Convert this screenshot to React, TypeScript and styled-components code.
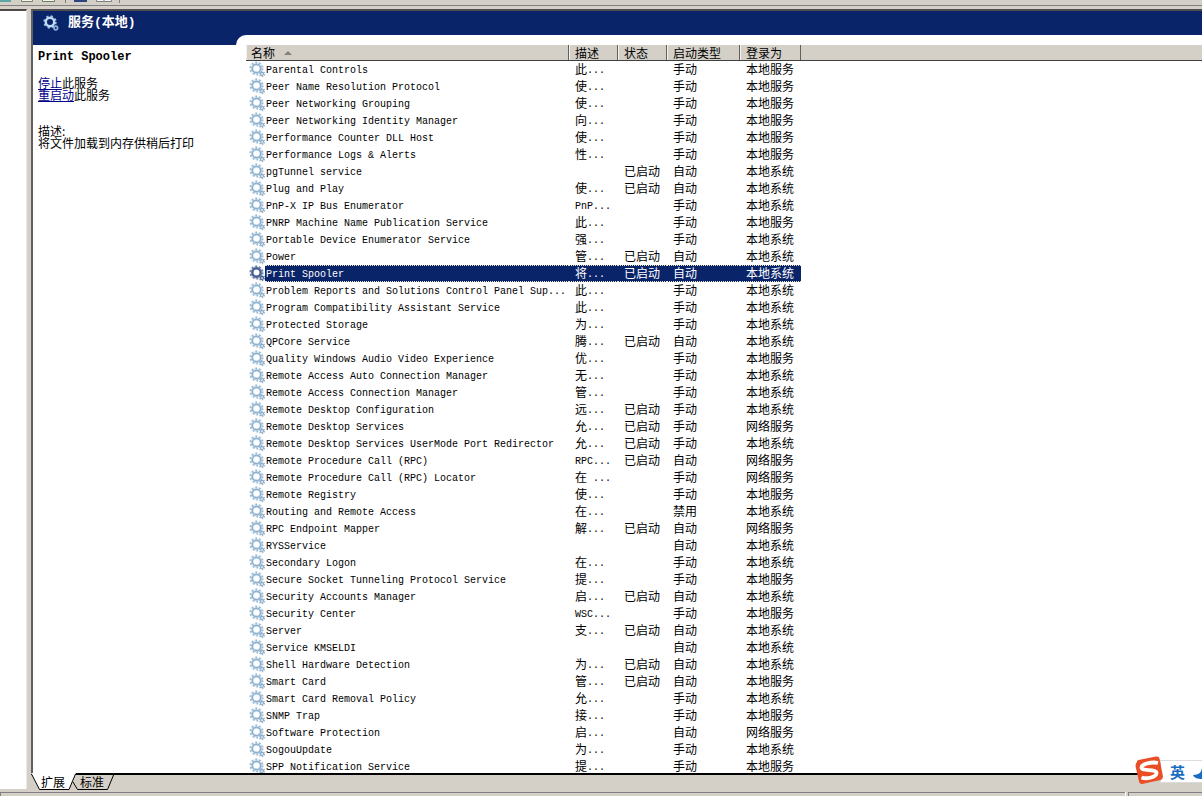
import React from "react";
import styled, { createGlobalStyle, css } from "styled-components";

const face = "#d4d0c8";
const navy = "#0a246a";
const cjk = '"Noto Sans CJK SC", sans-serif';
const mono = '"Liberation Mono", "Noto Sans CJK SC", monospace';

const GlobalStyle = createGlobalStyle`
  * { box-sizing: border-box; }
  body { margin: 0; background: ${face}; color: #000; font: 12px/17px ${cjk}; }
  button { font: inherit; color: inherit; border: 0; padding: 0; background: none; text-align: left; }
`;

const Window = styled.div`
  display: flex;
  flex-direction: column;
  height: 100vh;
  overflow: hidden;
  background: ${face};
`;

const Toolbar = styled.div`
  flex: none;
  height: 6px;
  margin-bottom: 3px;
  border-bottom: 1px solid #808080;
  svg { display: block; }
`;

const Main = styled.main`
  flex: 1;
  min-height: 0;
  display: flex;
  gap: 4px;
`;

const TreePane = styled.aside`
  flex: none;
  width: 27px;
  margin-bottom: 1px;
  background: #fff;
  border-top: 2px solid #504a46;
  border-right: 1px solid #ece9e2;
`;

const ViewPane = styled.section`
  flex: 1;
  min-width: 0;
  display: flex;
  flex-direction: column;
`;

const View = styled.div`
  flex: 1;
  min-height: 0;
  display: flex;
  flex-direction: column;
  border-top: 2px solid #504e50;
  border-left: 2px solid #606060;
  background: ${navy};
`;

const TitleBand = styled.header`
  flex: none;
  display: flex;
  align-items: center;
  gap: 9px;
  height: 24px;
  padding-left: 10px;
  color: #fff;
`;

const Title = styled.h1`
  margin: 0;
  font: 700 13px/16px ${mono};
`;

const Body = styled.div`
  flex: 1;
  min-height: 0;
  display: flex;
`;

const Detail = styled.div`
  flex: none;
  width: 203px;
  margin-top: 10px;
  padding: 4px 5px;
  background: #fff;
  line-height: 12px;
`;

const DetailName = styled.h2`
  margin: 0 0 12px;
  font: 700 12px/16px ${mono};
`;

const DetailText = styled.p`
  margin: 0 0 24px;
`;

const Action = styled.a`
  color: #00008c;
  text-decoration: underline;
`;

const ListPane = styled.div`
  flex: 1;
  min-width: 0;
  padding: 10px 0 0 10px;
  background: #fff;
  border-top-left-radius: 10px;
  overflow: hidden;
`;

const Table = styled.table`
  width: 100%;
  table-layout: fixed;
  border-collapse: separate;
  border-spacing: 0;
`;

const Col = styled.col<{ $w?: number }>`
  ${(p) => p.$w && `width: ${p.$w}px;`}
`;

const Head = styled.th`
  height: 16px;
  padding: 0;
  background: ${face};
  border-bottom: 1px solid #404040;
  font-weight: 400;
  line-height: 15px;
`;

const HeadButton = styled.button<{ $first?: boolean }>`
  display: flex;
  align-items: center;
  gap: 9px;
  width: 100%;
  height: 15px;
  padding-left: ${(p) => (p.$first ? 5 : 6)}px;
  border-right: 1px solid #606060;
  box-shadow: inset 1px 0 #f4f2ee;
  line-height: 15px;
`;

const Cell = styled.td`
  height: 17px;
  padding: 0;
`;

const selectedBox = css`
  background: ${navy};
  color: #fff;
  &::after {
    content: "";
    position: absolute;
    inset: 0;
    border: 1px dotted #f0e4c0;
    border-width: 1px 0;
  }
`;

const CellBox = styled.div<{ $selected?: boolean }>`
  position: relative;
  height: 17px;
  padding-left: 6px;
  overflow: hidden;
  line-height: 15px;
  white-space: nowrap;
  ${(p) => p.$selected && selectedBox}
`;

const NameCell = styled.div`
  display: flex;
  padding-left: 3px;
  svg { flex: none; }
`;

const NameBox = styled(CellBox)`
  flex: 1;
  padding-left: 1px;
`;

const Latin = styled.span`
  font-family: ${mono};
  font-size: 10px;
  line-height: 12px;
  vertical-align: 1px;
`;

const TabBar = styled.nav`
  flex: none;
  display: flex;
  height: 17px;
  border-top: 2px solid #000;
  background: ${face};
`;

const Tab = styled.button<{ $active?: boolean }>`
  position: relative;
  width: ${(p) => (p.$active ? 45 : 39)}px;
  height: 17px;
  margin-top: -2px;
  padding-left: ${(p) => (p.$active ? 10 : 4)}px;
  span { position: relative; }
  svg { position: absolute; left: 0; top: 0; overflow: visible; }
`;

const StatusBar = styled.footer`
  flex: none;
  display: flex;
  gap: 3px;
  height: 6px;
  padding-top: 2px;
`;

const StatusPart = styled.div<{ $w?: number }>`
  flex: ${(p) => (p.$w ? `none` : 1)};
  ${(p) => p.$w && `width: ${p.$w}px;`}
  border: solid #808080;
  border-width: 1px 0 0 1px;
  box-shadow: 1px 0 #fff;
`;

const Ime = styled.div`
  position: fixed;
  right: 0;
  bottom: 13px;
  display: flex;
  align-items: center;
  width: 42px;
  height: 23px;
  padding-left: 9px;
  background: #fff;
  border: 1px solid #dcdcdc;
  border-right: 0;
  color: #1a6cc0;
  font-size: 15px;
  font-weight: 700;
`;

const ImeLogo = styled.svg`
  position: absolute;
  left: -27px;
  top: -5px;
`;

const ImeMoon = styled.svg`
  position: absolute;
  right: 0;
  top: 6px;
`;

function Mixed({ text }: { text: string }) {
  const parts = text.match(/[\x20-\x7e]+|[^\x20-\x7e]+/g) ?? [];
  return (
    <>
      {parts.map((p, i) =>
        /^[\x20-\x7e]/.test(p) ? <Latin key={i}>{p}</Latin> : <React.Fragment key={i}>{p}</React.Fragment>
      )}
    </>
  );
}

function Gear({ dark }: { dark?: boolean }) {
  const ring = dark ? "#4a6190" : "#8fb0cc";
  const teeth = dark ? "#6b7fa6" : "#9fb9cf";
  return (
    <svg width="16" height="17" viewBox="0 0 16 17" aria-hidden="true">
      <circle cx="7.5" cy="7.5" r="7" fill={dark ? "#dde4f0" : "#eaf5fd"} />
      <circle cx="7.5" cy="7.5" r="6" fill="none" stroke={teeth} strokeWidth="2" strokeDasharray="1.7 2.07" />
      <circle cx="7.5" cy="7.5" r="4.2" fill="none" stroke={ring} strokeWidth={dark ? 2.4 : 1.7} />
      <circle cx="7.5" cy="7.5" r="2.6" fill="#fff" />
      <circle cx="13" cy="13" r="2.5" fill="none" stroke={teeth} strokeWidth="1.6" strokeDasharray="1.3 1.32" />
      <circle cx="13" cy="13" r="1.5" fill="#fff" stroke={ring} strokeWidth="1.3" />
    </svg>
  );
}

function TitleGear() {
  return (
    <svg width="16" height="16" viewBox="0 0 16 16" aria-hidden="true">
      <circle cx="7" cy="7" r="5.6" fill="none" stroke="#9dbfe6" strokeWidth="2.2" strokeDasharray="2.2 2.2" />
      <circle cx="7" cy="7" r="4.2" fill="none" stroke="#c2dbf4" strokeWidth="2.4" />
      <circle cx="12.8" cy="13" r="1.8" fill={navy} stroke="#8fb0dc" strokeWidth="1.7" />
    </svg>
  );
}

type Row = [string, string, string, string, string];
const M = "手动";
const A = "自动";
const ON = "已启动";
const LS = "本地服务";
const SY = "本地系统";
const NS = "网络服务";

const services: Row[] = [
  ["Parental Controls", "此...", "", M, LS],
  ["Peer Name Resolution Protocol", "使...", "", M, LS],
  ["Peer Networking Grouping", "使...", "", M, LS],
  ["Peer Networking Identity Manager", "向...", "", M, LS],
  ["Performance Counter DLL Host", "使...", "", M, LS],
  ["Performance Logs & Alerts", "性...", "", M, LS],
  ["pgTunnel service", "", ON, A, SY],
  ["Plug and Play", "使...", ON, A, SY],
  ["PnP-X IP Bus Enumerator", "PnP...", "", M, SY],
  ["PNRP Machine Name Publication Service", "此...", "", M, LS],
  ["Portable Device Enumerator Service", "强...", "", M, SY],
  ["Power", "管...", ON, A, SY],
  ["Print Spooler", "将...", ON, A, SY],
  ["Problem Reports and Solutions Control Panel Sup...", "此...", "", M, SY],
  ["Program Compatibility Assistant Service", "此...", "", M, SY],
  ["Protected Storage", "为...", "", M, SY],
  ["QPCore Service", "腾...", ON, A, SY],
  ["Quality Windows Audio Video Experience", "优...", "", M, LS],
  ["Remote Access Auto Connection Manager", "无...", "", M, SY],
  ["Remote Access Connection Manager", "管...", "", M, SY],
  ["Remote Desktop Configuration", "远...", ON, M, SY],
  ["Remote Desktop Services", "允...", ON, M, NS],
  ["Remote Desktop Services UserMode Port Redirector", "允...", ON, M, SY],
  ["Remote Procedure Call (RPC)", "RPC...", ON, A, NS],
  ["Remote Procedure Call (RPC) Locator", "在 ...", "", M, NS],
  ["Remote Registry", "使...", "", M, LS],
  ["Routing and Remote Access", "在...", "", "禁用", SY],
  ["RPC Endpoint Mapper", "解...", ON, A, NS],
  ["RYSService", "", "", A, SY],
  ["Secondary Logon", "在...", "", M, SY],
  ["Secure Socket Tunneling Protocol Service", "提...", "", M, LS],
  ["Security Accounts Manager", "启...", ON, A, SY],
  ["Security Center", "WSC...", "", M, LS],
  ["Server", "支...", ON, A, SY],
  ["Service KMSELDI", "", "", A, SY],
  ["Shell Hardware Detection", "为...", ON, A, SY],
  ["Smart Card", "管...", ON, A, LS],
  ["Smart Card Removal Policy", "允...", "", M, SY],
  ["SNMP Trap", "接...", "", M, LS],
  ["Software Protection", "启...", "", A, NS],
  ["SogouUpdate", "为...", "", M, SY],
  ["SPP Notification Service", "提...", "", M, LS],
];

const columns = [
  { label: "名称", width: 323 },
  { label: "描述", width: 49 },
  { label: "状态", width: 49 },
  { label: "启动类型", width: 73 },
  { label: "登录为", width: 61 },
];

export default function App() {
  return (
    <Window>
      <GlobalStyle />
      <Toolbar>
        <svg width="130" height="3" viewBox="0 0 130 3" aria-hidden="true">
          <path d="M0 1h11" stroke="#5aa7a4" strokeWidth="2" />
          <path d="M21.500 0v1.500h11V0" fill="#f4f4ee" stroke="#77806a" />
          <path d="M42.500 0v1.500h12V0" fill="#f4f4ee" stroke="#6d7d62" />
          <path d="M65.500 0v3M119.500 0v3" stroke="#808080" />
          <path d="M74 1h13" stroke="#2c4480" strokeWidth="2" />
          <path d="M96.500 0v1.500h15V0M104 0v2" fill="#f4f4f4" stroke="#808080" />
        </svg>
      </Toolbar>
      <Main>
        <TreePane />
        <ViewPane>
          <View>
            <TitleBand>
              <TitleGear />
              <Title>服务(本地)</Title>
            </TitleBand>
            <Body>
              <Detail>
                <DetailName>Print Spooler</DetailName>
                <DetailText>
                  <Action href="#stop">停止</Action>此服务
                  <br />
                  <Action href="#restart">重启动</Action>此服务
                </DetailText>
                <DetailText>
                  描述:
                  <br />
                  将文件加载到内存供稍后打印
                </DetailText>
              </Detail>
              <ListPane>
                <Table>
                  <colgroup>
                    {columns.map((c) => (
                      <Col key={c.label} $w={c.width} />
                    ))}
                    <Col />
                  </colgroup>
                  <thead>
                    <tr>
                      {columns.map((c, i) => (
                        <Head key={c.label} scope="col">
                          <HeadButton type="button" $first={i === 0}>
                            {c.label}
                            {i === 0 && (
                              <svg width="8" height="4" viewBox="0 0 8 4" aria-hidden="true">
                                <path d="M0 4L4 0l4 4z" fill="#808080" />
                              </svg>
                            )}
                          </HeadButton>
                        </Head>
                      ))}
                      <Head as="td" />
                    </tr>
                  </thead>
                  <tbody>
                    {services.map(([name, ...rest]) => {
                      const selected = name === "Print Spooler";
                      return (
                        <tr key={name} aria-selected={selected}>
                          <Cell>
                            <NameCell>
                              <Gear dark={selected} />
                              <NameBox $selected={selected}>
                                <Mixed text={name} />
                              </NameBox>
                            </NameCell>
                          </Cell>
                          {rest.map((value, i) => (
                            <Cell key={i}>
                              <CellBox $selected={selected}>
                                <Mixed text={value} />
                              </CellBox>
                            </Cell>
                          ))}
                          <Cell />
                        </tr>
                      );
                    })}
                  </tbody>
                </Table>
              </ListPane>
            </Body>
          </View>
          <TabBar>
            <Tab type="button" $active>
              <svg width="46" height="17" viewBox="0 0 46 17" aria-hidden="true">
                <path d="M0 0h45L38 16H8z" fill="#fff" />
                <path d="M0.500 1L8.500 16.500H38L44.500 1" fill="none" stroke="#000" />
              </svg>
              <span>扩展</span>
            </Tab>
            <Tab type="button">
              <svg width="39" height="17" viewBox="0 0 39 17" aria-hidden="true">
                <path d="M-3 9L1.500 16.500H31.500L38 1" fill="none" stroke="#000" />
                <path d="M0 1h39" stroke="#000" strokeWidth="2" />
              </svg>
              <span>标准</span>
            </Tab>
          </TabBar>
        </ViewPane>
      </Main>
      <StatusBar>
        <StatusPart />
        <StatusPart $w={74} />
      </StatusBar>
      <Ime>
        <ImeLogo width="30" height="30" viewBox="0 0 30 30" aria-hidden="true">
          <path d="M3 6Q2.500 4.500 4.500 4L22 0.500Q25 0 25.500 2.500L29 20.500Q29 23 26.500 24L8 28Q5.500 28 5 25.500L1.500 10Q1.500 7 3 6z" fill="#ea4e26" />
          <path d="M24 7C18 5.500 7.500 8 7.500 11.500C7.500 15.500 22.500 12.500 22.500 17C22.500 21 13 23.500 7.500 21.500" fill="none" stroke="#fff" strokeWidth="3.800" />
        </ImeLogo>
        英
        <ImeMoon width="9" height="12" viewBox="0 0 9 12" aria-hidden="true">
          <path d="M9 0C9 5 6 8 0 8C1 11 5 12 9 12z" fill="#1a6cc0" />
        </ImeMoon>
      </Ime>
    </Window>
  );
}
